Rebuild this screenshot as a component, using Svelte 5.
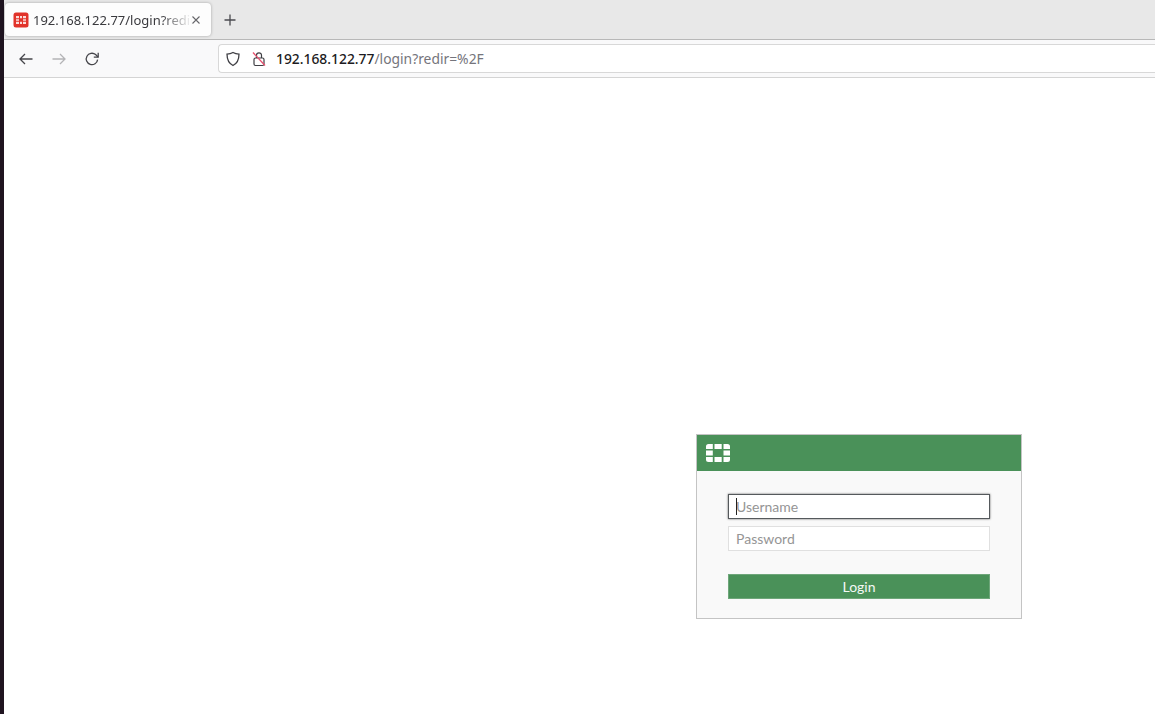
<script>
  let username = $state("")
  let password = $state("")
</script>

<div class="screen">
  <div class="edge"></div>
  <div class="window">
    <div class="tabbar">
      <div class="tab">
        <svg class="favicon" width="16" height="16" viewBox="0 0 16 16">
          <rect width="15" height="15" x="0.5" y="0.5" rx="2.5" fill="#e1332a" />
          <path d="M3 4h3v2.200H3zM7 4h2v2.200H7zM10 4h3v2.200h-3zM3 7.200h3v1.600H3zM10 7.200h3v1.600h-3zM3 9.800h3V12H3zM7 9.800h2V12H7zM10 9.800h3V12h-3z" fill="#fbdcd9" />
        </svg>
        <span class="tab-title">192.168.122.77/login?redir=%2F</span>
        <svg class="close" width="8" height="8" viewBox="0 0 8 8">
          <path d="M0.5 0.500l7 7M7.500 0.500l-7 7" stroke="#66666a" stroke-width="1.100" fill="none" />
        </svg>
      </div>
      <svg class="newtab" width="14" height="14" viewBox="0 0 14 14">
        <path d="M7 1.500v11M1.500 7h11" stroke="#4a4a4f" stroke-width="1.300" fill="none" />
      </svg>
    </div>

    <div class="navbar">
      <div class="navbuttons">
        <svg width="16" height="16" viewBox="0 0 16 16">
          <path d="M14.500 8H2M7 3L2 8l5 5" stroke="#45454a" stroke-width="1.300" fill="none" />
        </svg>
        <svg width="16" height="16" viewBox="0 0 16 16">
          <path d="M1.500 8H14M9 3l5 5-5 5" stroke="#b4b4b6" stroke-width="1.300" fill="none" />
        </svg>
        <svg width="16" height="16" viewBox="0 0 16 16">
          <path d="M13.600 8.600A5.700 5.700 0 1 1 11.600 3.600L14 6" stroke="#45454a" stroke-width="1.300" fill="none" />
          <path d="M14.200 1.800V6.200H9.800" stroke="#45454a" stroke-width="1.300" fill="none" />
        </svg>
      </div>
      <div class="urlbar">
        <svg width="16" height="16" viewBox="0 0 16 16">
          <path d="M8 1.500c1.800 1 3.800 1.500 6 1.600 0 5-1.500 9.300-6 11.400C3.500 12.400 2 8.100 2 3.100c2.200-.1 4.200-.6 6-1.600z" stroke="#3f3f44" stroke-width="1.300" fill="none" />
        </svg>
        <svg class="lock" width="16" height="16" viewBox="0 0 16 16">
          <path d="M5.500 7V4.300a2.500 2.500 0 0 1 5 0V7" stroke="#3f3f44" stroke-width="1.200" fill="none" />
          <rect x="3" y="7" width="10" height="7.500" rx="1.500" stroke="#3f3f44" stroke-width="1.200" fill="none" />
          <path d="M2 1.500l12 13" stroke="#e8506e" stroke-width="1.300" fill="none" />
        </svg>
        <span class="url"><b>192.168.122.77</b><span class="path">/login?redir=%2F</span></span>
      </div>
    </div>

    <main class="page">
      <form class="login" onsubmit={(e) => e.preventDefault()}>
        <header class="login-head">
          <svg width="26" height="20" viewBox="0 0 26 20">
            <path d="M1 6V3.500Q1 1 3.500 1H7.800v5zM9.500 1h7.200v5H9.500zM18.500 1h4Q25 1 25 3.500V6h-6.500zM1 7.500h6.800v5H1zM18.500 7.500H25v5h-6.500zM1 14h6.800v5H3.500Q1 19 1 16.500zM9.500 14h7.200v5H9.500zM18.500 14H25v2.500Q25 19 22.500 19h-4z" fill="#fff" />
          </svg>
        </header>
        <div class="login-body">
          <div class="field focused">
            <span class="caret"></span>
            <input type="text" placeholder="Username" bind:value={username} />
          </div>
          <div class="field">
            <input type="password" placeholder="Password" bind:value={password} />
          </div>
          <button type="submit">Login</button>
        </div>
      </form>
    </main>
  </div>
</div>

<style>
  :global(body) {
    margin: 0;
    background: #fff;
    overflow: hidden;
  }

  .screen {
    display: flex;
    width: 1155px;
    height: 714px;
    overflow: hidden;
  }

  .edge {
    width: 4px;
    flex: none;
    background: #1f1420;
  }

  .window {
    flex: 1;
    min-width: 0;
    display: flex;
    flex-direction: column;
    font-family: "Noto Sans", sans-serif;
  }

  .tabbar {
    height: 40px;
    flex: none;
    box-sizing: border-box;
    background: #e8e8e8;
    border-bottom: 1px solid #b8b8b8;
    display: flex;
    align-items: flex-start;
    padding: 3px 0 0 1px;
  }

  .tab {
    width: 206px;
    height: 33px;
    box-sizing: border-box;
    background: #fdfdfd;
    border-radius: 4px;
    box-shadow: 0 0 3px rgba(0, 0, 0, 0.3);
    display: flex;
    align-items: center;
    padding: 0 11px 0 8px;
  }

  .favicon {
    flex: none;
    margin-right: 4px;
  }

  .tab-title {
    flex: 1;
    min-width: 0;
    overflow: hidden;
    white-space: nowrap;
    font-size: 13px;
    color: #3a3a3e;
    -webkit-mask-image: linear-gradient(to right, #000 80%, transparent);
    mask-image: linear-gradient(to right, #000 80%, transparent);
  }

  .close {
    flex: none;
  }

  .newtab {
    margin: 10px 0 0 12px;
  }

  .navbar {
    height: 38px;
    flex: none;
    box-sizing: border-box;
    background: #f9f9fa;
    border-bottom: 1px solid #d4d4d4;
    display: flex;
    align-items: center;
  }

  .navbuttons {
    display: flex;
    gap: 17px;
    padding-left: 14px;
    width: 214px;
    box-sizing: border-box;
    flex: none;
  }

  .urlbar {
    flex: 1;
    height: 29px;
    box-sizing: border-box;
    background: #fff;
    border: 1px solid #d8d8d8;
    border-right: none;
    border-radius: 4px 0 0 4px;
    display: flex;
    align-items: center;
    padding-left: 6px;
  }

  .lock {
    margin-left: 10px;
    margin-right: 9px;
  }

  .url {
    font-size: 13.85px;
    color: #1c1b22;
    white-space: nowrap;
  }

  .url b {
    font-weight: 500;
  }

  .path {
    color: #75757c;
  }

  .page {
    flex: 1;
    background: #fff;
    padding: 356px 0 0 692px;
    font-family: Lato, sans-serif;
  }

  .login {
    width: 326px;
    height: 185px;
    box-sizing: border-box;
    border: 1px solid #c4c4c4;
    background: #f9f9f9;
  }

  .login-head {
    height: 36px;
    background: #4a9159;
    display: flex;
    align-items: center;
    padding-left: 8px;
  }

  .login-body {
    display: flex;
    flex-direction: column;
    padding: 23px 31px 0;
  }

  .field {
    position: relative;
    height: 25px;
    box-sizing: border-box;
    border: 1px solid #e0e0e0;
    background: #fff;
    margin-bottom: 7px;
    display: flex;
  }

  .field.focused {
    border: 1px solid #55595c;
    box-shadow: 0 0 2px rgba(0, 0, 0, 0.6);
  }

  .focused input {
    padding-bottom: 2px;
  }

  .caret {
    position: absolute;
    left: 7px;
    top: 3px;
    width: 1px;
    height: 17px;
    background: #222;
  }

  .field input {
    flex: 1;
    min-width: 0;
    border: none;
    outline: none;
    background: transparent;
    padding: 0 7px;
    font-family: Lato, sans-serif;
    font-size: 14px;
    color: #333;
  }

  .field input::placeholder {
    color: #959595;
    opacity: 1;
  }

  button {
    height: 25px;
    margin-top: 16px;
    border: 1px solid #6ea67a;
    background: #4a9159;
    color: #f4f8f5;
    font-family: Lato, sans-serif;
    font-size: 14px;
    padding: 0;
  }
</style>
